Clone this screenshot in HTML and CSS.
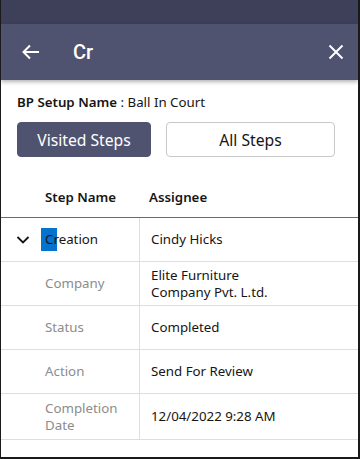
FILE: index.html
```html
<!DOCTYPE html>
<html lang="en">
<head>
    <meta charset="UTF-8">
    <meta name="viewport" content="width=device-width, initial-scale=1.0">
    <title>Cr</title>
    <link rel="stylesheet" href="styles.css">
</head>
<body>
    <div id="screen">
        <div class="status-bar"></div>
        <div class="app-bar">
            <svg class="icon" width="24" height="24" viewBox="0 0 24 24">
                <path d="M20 12H5M11 5.5L4.5 12L11 18.5" fill="none" stroke="#fff" stroke-width="2"/>
            </svg>
            <span class="app-title">Cr</span>
            <svg class="icon close" width="24" height="24" viewBox="0 0 24 24">
                <path d="M5.5 5.5L18.5 18.5M18.5 5.5L5.5 18.5" fill="none" stroke="#fff" stroke-width="2"/>
            </svg>
        </div>

        <div class="content">
            <p class="setup-name"><b>BP Setup Name</b> : Ball In Court</p>

            <div class="tabs">
                <button class="tab active">Visited Steps</button>
                <button class="tab">All Steps</button>
            </div>

            <div class="table">
                <div class="row head">
                    <div class="cell name">Step Name</div>
                    <div class="cell value">Assignee</div>
                </div>
                <div class="row">
                    <div class="cell name">
                        <svg class="chevron" width="14" height="14" viewBox="0 0 14 14">
                            <path d="M1.5 4L7 9.5L12.5 4" fill="none" stroke="#161513" stroke-width="1.8"/>
                        </svg>
                        <span><span class="hit">C</span>reation</span>
                    </div>
                    <div class="cell value">Cindy Hicks</div>
                </div>
                <div class="row">
                    <div class="cell name label">Company</div>
                    <div class="cell value">Elite Furniture<br>Company Pvt. L.td.</div>
                </div>
                <div class="row">
                    <div class="cell name label">Status</div>
                    <div class="cell value">Completed</div>
                </div>
                <div class="row">
                    <div class="cell name label">Action</div>
                    <div class="cell value">Send For Review</div>
                </div>
                <div class="row tall">
                    <div class="cell name label">Completion<br>Date</div>
                    <div class="cell value">12/04/2022 9:28 AM</div>
                </div>
            </div>
        </div>
    </div>
</body>
</html>
```

FILE: styles.css
```css
body {
    margin: 0;
    font-family: "Noto Sans", "Open Sans", sans-serif;
    font-size: 13.3px;
    color: #161513;
    background-color: #fff;
}

#screen {
    width: 360px;
    height: 459px;
    box-sizing: border-box;
    border-left: 1px solid #1a1a1a;
    border-right: 2px solid #1a1a1a;
    border-bottom: 2px solid #1a1a1a;
    overflow: hidden;
}

.status-bar {
    height: 24px;
    background-color: #3e4059;
}

.app-bar {
    height: 56px;
    display: flex;
    align-items: center;
    padding: 0 0 0 18px;
    background-color: #50536f;
    box-shadow: 0 2px 4px rgba(0, 0, 0, 0.3);
    position: relative;
}

.app-title {
    font-family: Roboto, sans-serif;
    font-weight: 500;
    font-size: 20px;
    color: #fff;
    margin-left: 30px;
    flex: 1;
}

.close {
    margin-right: 10px;
}

.content {
    padding-top: 12px;
}

.setup-name {
    margin: 0 0 0 16px;
    line-height: 20px;
}

.setup-name b {
    font-weight: 600;
}

.tabs {
    display: flex;
    gap: 15px;
    margin: 10px 0 0 16px;
}

.tab {
    height: 35px;
    box-sizing: border-box;
    font-family: "Noto Sans", sans-serif;
    font-size: 15.7px;
    border: 1px solid #c8c8c8;
    border-radius: 4px;
    background-color: #fff;
    color: #161513;
    padding: 0;
    width: 169px;
}

.tab.active {
    width: 134px;
    background-color: #50536f;
    border-color: #50536f;
    color: #fff;
}

.table {
    margin-right: -4px;
}

.row {
    display: flex;
    height: 43px;
    border-bottom: 1px solid #dedede;
}

.row.tall {
    height: 45px;
}

.row.head {
    height: 60px;
    border-bottom: 1px solid #6b6b6b;
    font-weight: 600;
}

.row.head .cell {
    align-items: flex-end;
    padding-bottom: 11px;
    border-right: none;
}

.cell {
    display: flex;
    align-items: center;
    line-height: 17px;
    box-sizing: border-box;
}

.cell.name {
    width: 139px;
    padding-left: 44px;
    border-right: 1px solid #dedede;
    position: relative;
}

.cell.value {
    flex: 1;
    padding-left: 11px;
}

.row.head .cell.value {
    padding-left: 9px;
}

.label {
    color: #8c8c8c;
}

.chevron {
    position: absolute;
    left: 15px;
    top: 15px;
}

.hit {
    background-color: #0572ce;
    padding: 2px 4px 3px;
    margin: 0 -4px;
}
```
